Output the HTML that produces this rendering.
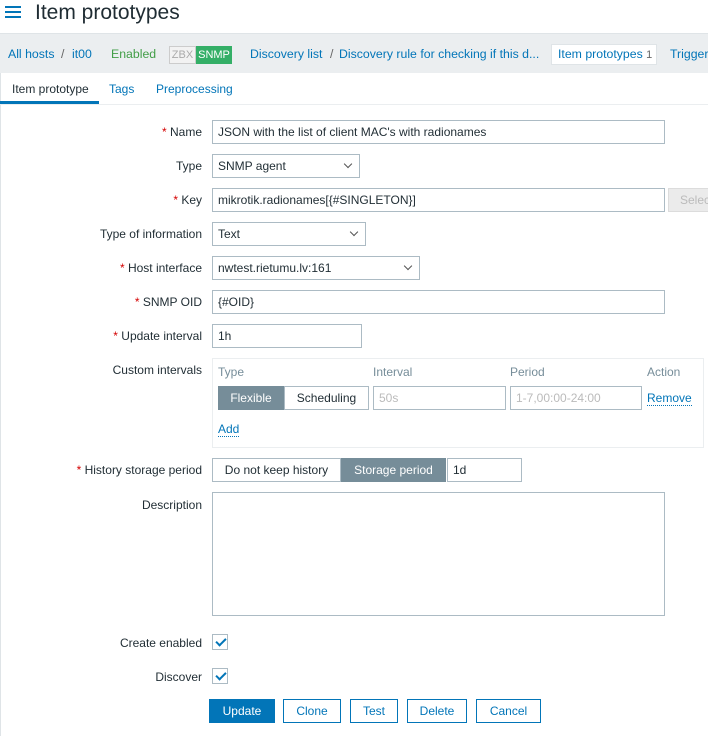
<!DOCTYPE html>
<html><head><meta charset="utf-8"><style>
*{box-sizing:border-box;margin:0;padding:0}
body{width:708px;height:736px;position:relative;background:#fff;font-family:"Liberation Sans",Arial,sans-serif;font-size:12px;color:#1f2c33;overflow:hidden}
.a{position:absolute;white-space:nowrap}
.lnk{color:#0275b8}
.bc{font-size:12.3px}
.lbl{position:absolute;right:506px;white-space:nowrap;line-height:14px}
.req{color:#d40000}
.in{position:absolute;border:1px solid #acbbc4;background:#fff;height:24px;line-height:22px;padding-left:5px;white-space:nowrap;overflow:hidden}
.sel:after{content:"";position:absolute;right:8px;top:6px;width:5px;height:5px;border-right:1px solid #555;border-bottom:1px solid #555;transform:rotate(45deg)}
.btn{position:absolute;height:24px;line-height:22px;text-align:center;border:1px solid #0275b8;color:#0275b8;background:#fff}
.cb{position:absolute;width:16px;height:16px;border:1px solid #acbbc4;background:#fff}
.cb:after{content:"";position:absolute;left:5px;top:1px;width:4px;height:8px;border-right:2px solid #0275b8;border-bottom:2px solid #0275b8;transform:rotate(45deg)}
.dot{border-bottom:1px dotted #0275b8}
</style></head><body>
<div class="a" style="left:5px;top:6px;width:16px;height:2px;background:#0275b8;box-shadow:0 5px 0 #0275b8,0 10px 0 #0275b8"></div>
<div class="a" style="left:35px;top:0;font-size:21px;line-height:26px;color:#1f2c33">Item prototypes</div>
<div class="a" style="left:0;top:33px;width:708px;height:40px;background:#ebeef0;border-top:1px solid #dfe4e7"></div>
<div class="a lnk bc" style="left:8px;top:47px">All hosts</div>
<div class="a bc" style="left:61px;top:47px;color:#666">/</div>
<div class="a lnk bc" style="left:72px;top:47px">it00</div>
<div class="a bc" style="left:111px;top:47px;color:#429e47">Enabled</div>
<div class="a" style="left:169px;top:46px;width:27px;height:18px;border:1px solid #ccc;color:#aaa;font-size:11px;line-height:16px;text-align:center;background:#f2f2f2">ZBX</div>
<div class="a" style="left:196px;top:46px;width:36px;height:18px;background:#34af67;color:#fff;font-size:11px;line-height:18px;text-align:center">SNMP</div>
<div class="a lnk bc" style="left:250px;top:47px">Discovery list</div>
<div class="a bc" style="left:330px;top:47px;color:#666">/</div>
<div class="a lnk bc" style="left:339px;top:47px">Discovery rule for checking if this d...</div>
<div class="a bc" style="left:551px;top:44px;width:106px;height:21px;background:#fff;border:1px solid #dfe4e7;line-height:19px;padding-left:6px;color:#0275b8">Item prototypes <span style="color:#666;font-size:11px">1</span></div>
<div class="a lnk bc" style="left:670px;top:47px">Triggers</div>
<div class="a" style="left:0;top:73px;width:708px;height:663px;border-left:1px solid #dfe4e7"></div>
<div class="a" style="left:12px;top:82px">Item prototype</div>
<div class="a lnk" style="left:109px;top:82px">Tags</div>
<div class="a lnk" style="left:156px;top:82px">Preprocessing</div>
<div class="a" style="left:0;top:101px;width:99px;height:3px;background:#0275b8"></div>
<div class="a" style="left:0;top:104px;width:708px;height:1px;background:#ebeef0"></div>

<div class="lbl" style="top:125px"><span class="req">*</span> Name</div>
<div class="in" style="left:212px;top:120px;width:453px">JSON with the list of client MAC's with radionames</div>
<div class="lbl" style="top:159px">Type</div>
<div class="in sel" style="left:212px;top:154px;width:148px">SNMP agent</div>
<div class="lbl" style="top:193px"><span class="req">*</span> Key</div>
<div class="in" style="left:212px;top:188px;width:453px">mikrotik.radionames[{#SINGLETON}]</div>
<div class="a" style="left:668px;top:188px;width:50px;height:24px;background:#ebebeb;border:1px solid #dcdcdc;color:#bbb;line-height:22px;padding-left:11px">Select</div>
<div class="lbl" style="top:227px">Type of information</div>
<div class="in sel" style="left:212px;top:222px;width:154px">Text</div>
<div class="lbl" style="top:261px"><span class="req">*</span> Host interface</div>
<div class="in sel" style="left:212px;top:256px;width:208px">nwtest.rietumu.lv:161</div>
<div class="lbl" style="top:295px"><span class="req">*</span> SNMP OID</div>
<div class="in" style="left:212px;top:290px;width:453px">{#OID}</div>
<div class="lbl" style="top:329px"><span class="req">*</span> Update interval</div>
<div class="in" style="left:212px;top:324px;width:150px">1h</div>
<div class="lbl" style="top:363px">Custom intervals</div>
<div class="a" style="left:212px;top:358px;width:492px;height:90px;border:1px solid #ebeef0"></div>
<div class="a" style="left:218px;top:365px;color:#768d99">Type</div>
<div class="a" style="left:373px;top:365px;color:#768d99">Interval</div>
<div class="a" style="left:510px;top:365px;color:#768d99">Period</div>
<div class="a" style="left:647px;top:365px;color:#768d99">Action</div>
<div class="a" style="left:218px;top:386px;width:66px;height:24px;background:#768d99;color:#fff;line-height:24px;text-align:center">Flexible</div>
<div class="a" style="left:284px;top:386px;width:85px;height:24px;border:1px solid #acbbc4;line-height:22px;text-align:center">Scheduling</div>
<div class="in" style="left:373px;top:386px;width:133px;color:#bbb">50s</div>
<div class="in" style="left:510px;top:386px;width:132px;color:#bbb">1-7,00:00-24:00</div>
<div class="a lnk dot" style="left:647px;top:391px">Remove</div>
<div class="a lnk dot" style="left:218px;top:422px">Add</div>
<div class="lbl" style="top:463px"><span class="req">*</span> History storage period</div>
<div class="a" style="left:212px;top:458px;width:129px;height:24px;border:1px solid #acbbc4;line-height:22px;text-align:center">Do not keep history</div>
<div class="a" style="left:341px;top:458px;width:105px;height:24px;background:#768d99;color:#fff;line-height:24px;text-align:center">Storage period</div>
<div class="in" style="left:447px;top:458px;width:75px">1d</div>
<div class="lbl" style="top:498px">Description</div>
<div class="in" style="left:212px;top:492px;width:453px;height:124px"></div>
<div class="lbl" style="top:636px">Create enabled</div>
<div class="cb" style="left:212px;top:634px"></div>
<div class="lbl" style="top:670px">Discover</div>
<div class="cb" style="left:212px;top:668px"></div>
<div class="btn" style="left:209px;top:699px;width:66px;background:#0275b8;color:#fff">Update</div>
<div class="btn" style="left:283px;top:699px;width:58px">Clone</div>
<div class="btn" style="left:350px;top:699px;width:48px">Test</div>
<div class="btn" style="left:407px;top:699px;width:60px">Delete</div>
<div class="btn" style="left:476px;top:699px;width:65px">Cancel</div>
</body></html>
